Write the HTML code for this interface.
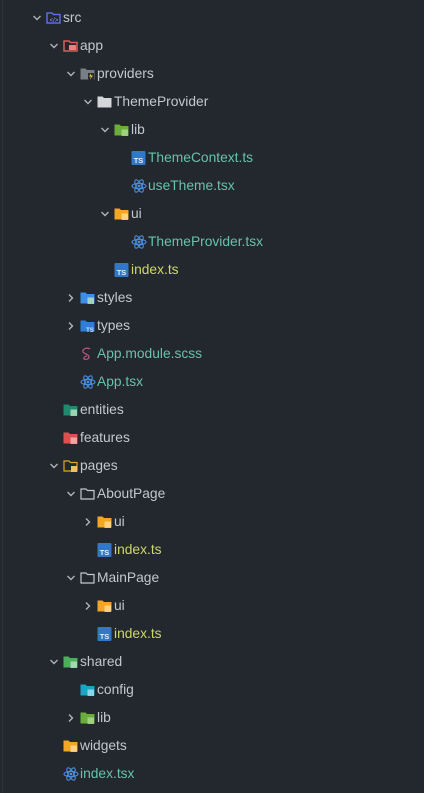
<!DOCTYPE html>
<html><head><meta charset="utf-8"><style>
body{margin:0;width:424px;height:793px;background:#23272e;overflow:hidden;font-family:"Liberation Sans",sans-serif;font-size:13.8px;position:relative}
.r{position:absolute;height:28px;line-height:28px;white-space:nowrap}
.ch{position:absolute;top:9px;width:10px;height:10px}
.ic{position:absolute;top:7px;width:15px;height:14px}
.t{position:absolute;top:0}
.vl{position:absolute;left:2px;top:0;width:1px;height:793px;background:#2e323a}
</style></head><body>
<div class="vl"></div>
<div id="tree"></div>
<script>
const F='#c3c7cf',T='#68c1ad',Y='#cdd76a';
const rows=[
[0,'o','fold:#5b6ee0:code','src',F],
[1,'o','fold:#e05a5a:grid','app',F],
[2,'o','fold:#7a7d84:bolt','providers',F],
[3,'o','fold:#d4d6da:','ThemeProvider',F],
[4,'o','fold:#6aad3a:lib','lib',F],
[5,'','ts','ThemeContext.ts',T],
[5,'','re','useTheme.tsx',T],
[4,'o','fold:#f2a623:grid2','ui',F],
[5,'','re','ThemeProvider.tsx',T],
[4,'','ts','index.ts',Y],
[2,'c','fold:#3d8ee6:lines','styles',F],
[2,'c','fold:#2f7ed8:ts','types',F],
[2,'','sass','App.module.scss',T],
[2,'','re','App.tsx',T],
[1,'','fold:#1f8a6e:lines','entities',F],
[1,'','fold:#e04f50:chk','features',F],
[1,'o','outy','pages',F],
[2,'o','out','AboutPage',F],
[3,'c','fold:#f2a623:grid2','ui',F],
[3,'','ts','index.ts',Y],
[2,'o','out','MainPage',F],
[3,'c','fold:#f2a623:grid2','ui',F],
[3,'','ts','index.ts',Y],
[1,'o','fold:#4caf5a:lines','shared',F],
[2,'','fold:#1ba3c4:gear','config',F],
[2,'c','fold:#6aad3a:lib','lib',F],
[1,'','fold:#f2a623:grid2','widgets',F],
[1,'','re','index.tsx',T]];
function icon(k){
 if(k=='ts')return '<svg class="ic" viewBox="0 0 15 14"><rect x="0.5" y="0" width="14" height="14" rx="1" fill="#3178c6"/><text x="7.5" y="12" font-size="7.5" font-weight="bold" fill="#e8eef8" text-anchor="middle" font-family="Liberation Sans">TS</text></svg>';
 if(k=='re')return '<svg class="ic" viewBox="0 0 16 14" style="width:16px"><g fill="none" stroke="#4b8fe0" stroke-width="1.1"><ellipse cx="8" cy="7" rx="7" ry="2.7"/><ellipse cx="8" cy="7" rx="7" ry="2.7" transform="rotate(60 8 7)"/><ellipse cx="8" cy="7" rx="7" ry="2.7" transform="rotate(120 8 7)"/></g><circle cx="8" cy="7" r="1.4" fill="#4b8fe0"/></svg>';
 if(k=='sass')return '<svg class="ic" viewBox="0 0 15 14"><path d="M10 2C7 0 2 2 3 5c1 2 6 2 6 5 0 2-3 3-5 2-1-1 1-3 3-3" fill="none" stroke="#c0587c" stroke-width="1.2"/></svg>';
 if(k=='out'||k=='outy'){const c=k=='out'?'#c3c7cf':'#e2a81e';return '<svg class="ic" viewBox="0 0 15 14"><path d="M1 2h5l1.5 1.5H14V12H1z" fill="none" stroke="'+c+'" stroke-width="1.2"/>'+(k=='outy'?'<rect x="8" y="7" width="6" height="6" fill="#f0c060"/>':'')+'</svg>';}
 const [,c,b]=k.split(':');
 let s='<svg class="ic" viewBox="0 0 15 14"><path d="M0.5 1.5h5l1.5 1.5h7.5v9.5h-14z" fill="'+c+'"/>';
 if(b=='code')s='<svg class="ic" viewBox="0 0 15 14"><path d="M1 2h5l1.5 1.5H14V12H1z" fill="none" stroke="'+c+'" stroke-width="1.5"/><text x="8" y="11" font-size="6" fill="#8fa0ff" text-anchor="middle">&lt;/&gt;</text>';
 if(b=='grid')s='<svg class="ic" viewBox="0 0 15 14"><path d="M1 2h5l1.5 1.5H14V12H1z" fill="none" stroke="'+c+'" stroke-width="1.5"/><path d="M6 6h7v5H6z" fill="#f08080"/>';
 if(b=='bolt')s+='<rect x="8" y="6" width="6" height="7" fill="#2a2d33"/><path d="M11 6.5l-2 3h2l-1 3 3-4h-2z" fill="#f0d020"/>';
 if(b=='lib'||b=='chk'||b=='gear'||b=='lines'||b=='ts'||b=='grid2'){
  const l={lib:'#a8d888',chk:'#f8b0b0',gear:'#9ae0f0',lines:'#b0e0c0',grid2:'#ffd890'}[b];
  if(b=='ts')s+='<text x="10" y="13" font-size="6" font-weight="bold" fill="#cfe4ff" text-anchor="middle">TS</text>';
  else s+='<rect x="7.5" y="6.5" width="6.5" height="6.5" fill="'+l+'" opacity="0.85"/>';
 }
 return s+'</svg>';
}
let h='';
rows.forEach((r,i)=>{
 const [L,c,k,n,col]=r;const ix=46+17*L,y=4+28*i;
 let ch='';
 if(c=='o')ch='<svg class="ch" style="left:'+(ix-14)+'px" viewBox="0 0 10 10"><path d="M1.5 3l3.5 3.5L8.5 3" fill="none" stroke="#aeb2ba" stroke-width="1.4"/></svg>';
 if(c=='c')ch='<svg class="ch" style="left:'+(ix-14)+'px" viewBox="0 0 10 10"><path d="M3 1.5l3.5 3.5L3 8.5" fill="none" stroke="#aeb2ba" stroke-width="1.4"/></svg>';
 h+='<div class="r" style="top:'+y+'px;left:0;width:424px">'+ch+'<div style="position:absolute;left:'+ix+'px;top:0">'+icon(k)+'</div><span class="t" style="left:'+(ix+17)+'px;color:'+col+'">'+n+'</span></div>';
});
document.getElementById('tree').innerHTML=h;
</script>
</body></html>
